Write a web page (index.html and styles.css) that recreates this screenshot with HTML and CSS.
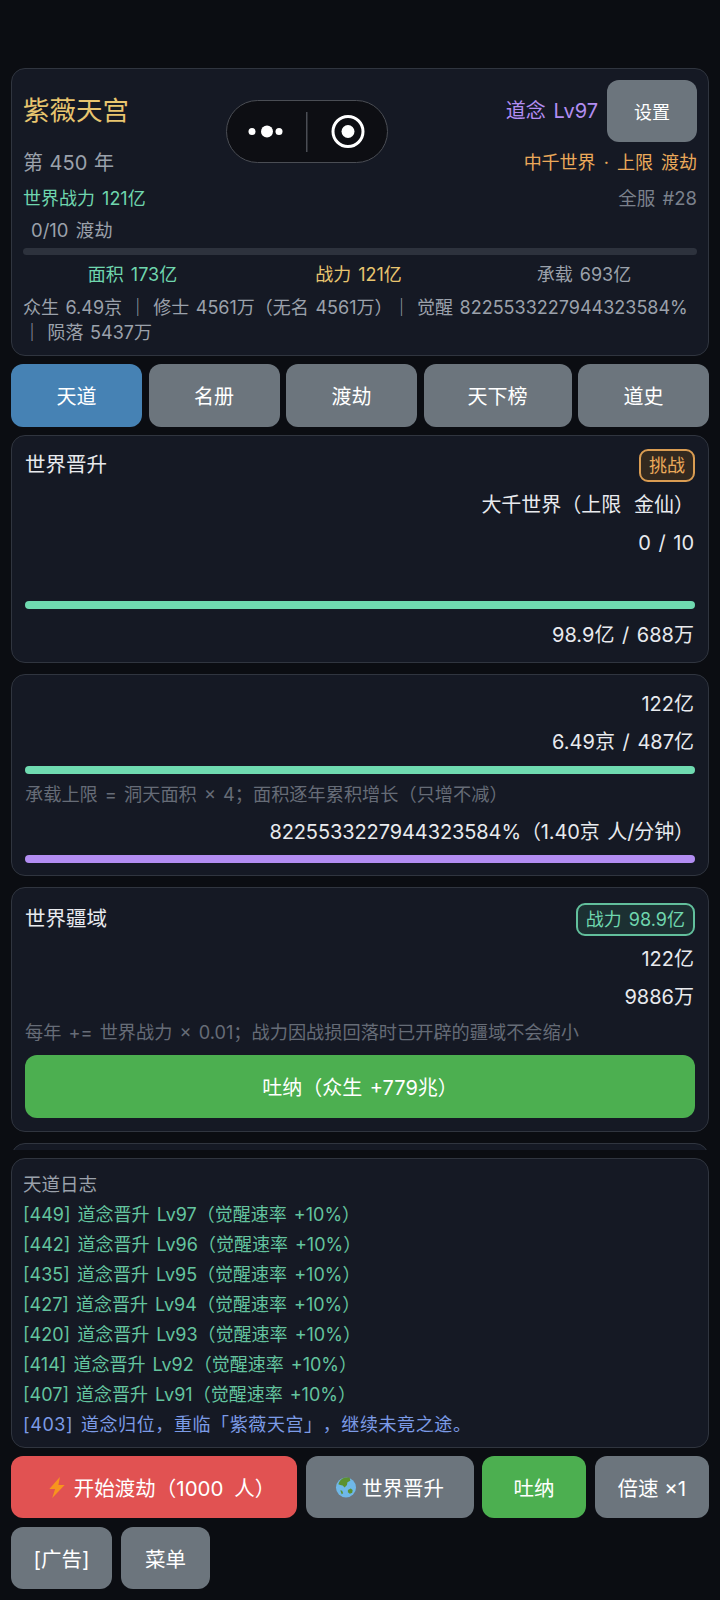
FILE: index.html
```html
<!DOCTYPE html>
<html lang="zh-CN"><head>
  <meta charset="UTF-8"><meta name="viewport" content="width=device-width, initial-scale=1.0">
  <title>紫薇天宫</title>
  <link rel="stylesheet" href="styles.css">
</head><body>

<header class="card top">
  <div class="top-row first">
    <span class="title">紫薇天宫</span>
    <div class="top-right">
      <span class="dao">道念 Lv97</span>
      <button class="btn set">设置</button>
    </div>
  </div>
  <div class="top-row second"><span class="gray">第 450 年</span><span class="orange">中千世界 · 上限 渡劫</span></div>
  <div class="top-row third"><span class="green">世界战力 121亿</span><span class="dim">全服 #28</span></div>
  <div class="tribulation">0/10 渡劫</div>
  <div class="track"></div>
  <div class="stats">
    <span class="green">面积 173亿</span>
    <span class="gold">战力 121亿</span>
    <span class="gray">承载 693亿</span>
  </div>
  <p class="info">众生 6.49京 ｜ 修士 4561万（无名 4561万）｜ 觉醒 8225533227944323584% ｜ 陨落 5437万</p>
</header>

<nav class="tabs">
  <button class="btn tab active">天道</button>
  <button class="btn tab">名册</button>
  <button class="btn tab">渡劫</button>
  <button class="btn tab">天下榜</button>
  <button class="btn tab">道史</button>
</nav>

<main class="stack">
  <section class="card panel tight">
    <div class="head"><h3>世界晋升</h3><span class="badge amber">挑战</span></div>
    <div class="row spaced">大千世界（上限 金仙）</div>
    <div class="row">0 / 10</div>
    <div class="spacer"></div>
    <div class="bar"></div>
    <div class="row">98.9亿 / 688万</div>
  </section>

  <section class="card panel">
    <div class="row">122亿</div>
    <div class="row">6.49京 / 487亿</div>
    <div class="bar"></div>
    <div class="note">承载上限 = 洞天面积 × 4；面积逐年累积增长（只增不减）</div>
    <div class="row long">8225533227944323584%（1.40京 人/分钟）</div>
    <div class="bar purple"></div>
  </section>

  <section class="card panel territory">
    <div class="head"><h3>世界疆域</h3><span class="badge teal">战力 98.9亿</span></div>
    <div class="row">122亿</div>
    <div class="row">9886万</div>
    <div class="note">每年 += 世界战力 × 0.01；战力因战损回落时已开辟的疆域不会缩小</div>
    <button class="btn wide">吐纳（众生 +779兆）</button>
  </section>

  <section class="card panel peek"></section>
</main>

<section class="card log">
  <div class="log-title">天道日志</div>
  <div class="log-line">[449] 道念晋升 Lv97（觉醒速率 +10%）</div>
  <div class="log-line">[442] 道念晋升 Lv96（觉醒速率 +10%）</div>
  <div class="log-line">[435] 道念晋升 Lv95（觉醒速率 +10%）</div>
  <div class="log-line">[427] 道念晋升 Lv94（觉醒速率 +10%）</div>
  <div class="log-line">[420] 道念晋升 Lv93（觉醒速率 +10%）</div>
  <div class="log-line">[414] 道念晋升 Lv92（觉醒速率 +10%）</div>
  <div class="log-line">[407] 道念晋升 Lv91（觉醒速率 +10%）</div>
  <div class="log-line blue">[403] 道念归位，重临「紫薇天宫」，继续未竟之途。</div>
</section>

<footer>
  <div class="actions">
    <button class="btn red">
      <svg class="emoji bolt" viewBox="0 0 20 22"><path fill="#f7941e" d="M13 0 2 12.500h6L5 22 18 8.500h-6.500z"/></svg>开始渡劫（1000 人）
    </button>
    <button class="btn">
      <svg class="emoji globe" viewBox="0 0 22 22"><circle cx="11" cy="11" r="10.500" fill="#6fb8e8"/><path fill="#5c9130" d="M6 2.500C8 .8 12 .2 15 1l.5 3-3 1.500-.5 3-2.500 2.500L7.500 9 5 8.500 3 7.500C3.500 5.500 4.500 3.800 6 2.500z"/><path fill="#5c9130" d="M13 13.500l3-1.500 2 1.500-.5 3-2.500 1-2-1.500zM5 14l2 .5 1 2.500-1.500 1z"/></svg>世界晋升
    </button>
    <button class="btn go">吐纳</button>
    <button class="btn speed">倍速 ×1</button>
  </div>
  <div class="actions-more">
    <button class="btn more">[广告]</button>
    <button class="btn more menu">菜单</button>
  </div>
</footer>

<!-- mini program capsule sits over the header -->
<div class="capsule">
  <svg width="162" height="63" viewBox="0 0 162 63">
    <circle cx="26" cy="31.500" r="3.500" fill="#fff"/>
    <circle cx="41" cy="31.500" r="6" fill="#fff"/>
    <circle cx="53" cy="31.500" r="3.500" fill="#fff"/>
    <rect x="80" y="12" width="1.500" height="40" fill="#4a4d54"/>
    <circle cx="122" cy="31.500" r="15" fill="none" stroke="#fff" stroke-width="3"/>
    <circle cx="122" cy="31.500" r="6.500" fill="#fff"/>
  </svg>
</div>

</body></html>
```

FILE: styles.css
```css
*{box-sizing:border-box;}
body{margin:0;padding:68px 11px 0;height:1600px;overflow:hidden;background:#0b0d12;color:#e8eaee;font-family:Inter,"Noto Sans CJK SC",sans-serif;font-size:20px;word-spacing:2px;text-spacing-trim:space-all;position:relative;}
h3{margin:0 0 4px;font-size:20.500px;font-weight:400;}
p{margin:0;}
.card{background:#151924;border:1px solid #30353f;border-radius:14px;}
.btn{display:flex;align-items:center;justify-content:center;height:62px;border:none;border-radius:12px;background:#6c757d;color:#fff;font:inherit;word-spacing:inherit;padding:0;}

.top{height:288px;padding:11px 11px 0;font-size:18px;}
.top-row{display:flex;justify-content:space-between;align-items:center;}
.first{height:62px;}
.second{height:28px;margin-top:5px;}
.third{height:28px;margin-top:8px;}
.title{font-size:26.500px;color:#e8c56f;padding-bottom:5px;}
.top-right{display:flex;align-items:center;gap:9px;}
.dao{font-size:20px;color:#b28df2;padding-bottom:3px;}
.set{width:90px;}
.second .gray{font-size:20px;word-spacing:1px;}
.gray{color:#9ba1ab;}
.dim{color:#7b818c;font-size:18.500px;}
.orange{color:#eba95a;font-size:18px;word-spacing:3px;}
.green{color:#6fd6ae;}
.gold{color:#e8c56f;}
.tribulation{height:26px;line-height:26px;margin-top:6px;padding-left:8px;color:#9ba1ab;font-size:18.500px;}
.track{height:7px;margin-top:5px;background:#2d323d;border-radius:4px;}
.stats{display:grid;grid-template-columns:219px 233px 218px;height:26px;line-height:26px;margin-top:7px;text-align:center;}
.info{margin-top:7px;line-height:25px;color:#9ba1ab;word-spacing:1.500px;}

.tabs{display:grid;grid-template-columns:131fr 131fr 131fr 148fr 131fr;gap:6.500px;margin-top:8px;}
.tab{height:63px;}
.active{background:#4682b4;}

.stack{display:flex;flex-direction:column;gap:11px;height:715px;margin-top:8px;overflow:hidden;}
.panel{flex:none;padding:10px 14px 12px 13px;}
.tight{padding-bottom:8px;}
.territory{padding-top:12px;padding-bottom:13px;}
.head{display:flex;justify-content:space-between;align-items:center;padding-top:2px;margin-bottom:4px;margin-right:-1px;}
.badge{height:33px;line-height:29px;padding:0 8px;border:2px solid;border-radius:9px;font-size:18px;}
.amber{color:#eba95a;border-color:#d99c52;background:#33291f;}
.teal{color:#6fd6ae;border-color:#62bf9c;background:#1c3032;}
.row{height:38px;line-height:38px;text-align:right;}
.spaced{word-spacing:7px;}
.long{letter-spacing:-.1px;}
.spacer{height:34px;}
.bar{height:8px;margin:5px -1px 7px 0;background:#6fdab0;border-radius:4px;}
.purple{background:#b28df2;margin-top:4px;margin-bottom:0;}
.note{height:26px;line-height:26px;margin:5px 0 6px;font-size:18.200px;color:#666c77;}
.row + .note{margin-top:3px;}
.wide{width:calc(100% + 1px);height:63px;margin-top:10px;background:#4caf50;}
.peek{height:60px;}

.log{height:290px;margin-top:8px;padding:12px 11px 0;font-size:18px;}
.log-title{height:26px;line-height:26px;margin-bottom:3px;color:#9ba1ab;font-size:18.500px;}
.log-line{height:30px;line-height:30px;color:#63c49f;}
.blue{color:#7c9be6;letter-spacing:.6px;}

.actions{display:grid;grid-template-columns:286px 168px 104px 1fr;gap:8.500px;margin-top:8px;font-size:20.500px;}
.actions-more{display:flex;gap:9px;margin-top:9px;font-size:20.500px;}
.red{background:#e15252;word-spacing:5px;}
.go{background:#4caf50;}
.speed{word-spacing:0;}
.more{padding:0 22.500px;}
.menu{padding:0 24px;}
.emoji{height:21px;flex:none;}
.bolt{width:20px;margin:0 7px 0 14px;}
.globe{width:22px;margin-right:5px;}

.capsule{position:absolute;left:226px;top:100px;width:162px;height:63px;background:#0d0e13;border:1.500px solid #4a4d54;border-radius:32px;}
.capsule svg{display:block;margin:-1.500px;}
```
